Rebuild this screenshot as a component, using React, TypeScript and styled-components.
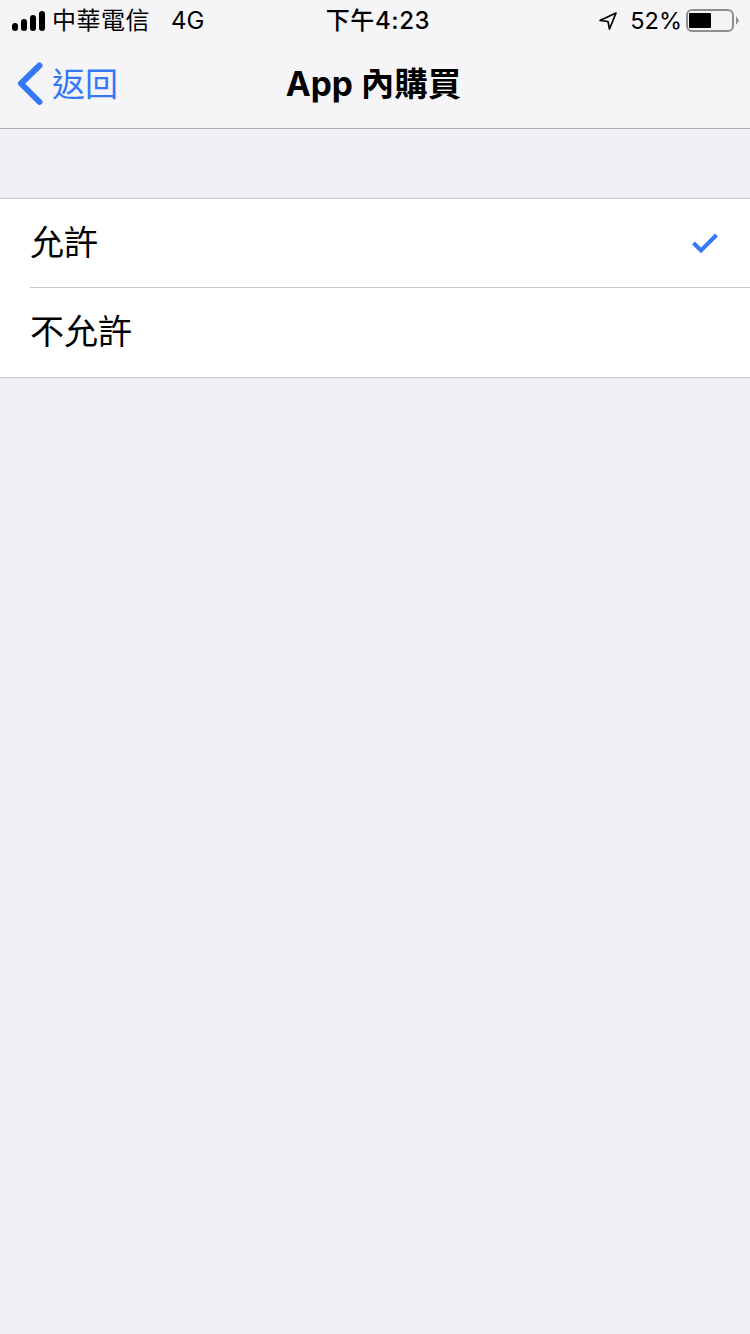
import React from "react";
import styled, { createGlobalStyle } from "styled-components";

const Global = createGlobalStyle`
    html, body {
        margin: 0;
        padding: 0;
        background: #efeff4;
    }
    body {
        font-family: Inter, "Noto Sans CJK TC", sans-serif;
    }
`

const Page = styled.div`
    width: 750px;
    height: 1334px;
    overflow: hidden;
    background: #efeff4;
    display: flex;
    flex-direction: column;
`

const Header = styled.div`
    height: 129px;
    box-sizing: border-box;
    background: #f5f5f8;
    border-bottom: 1px solid #a9a9ac;
    flex-shrink: 0;
`

const StatusBar = styled.div`
    height: 41px;
    padding: 0 10px 0 12px;
    display: grid;
    grid-template-columns: 1fr auto 1fr;
    align-items: center;
    color: #000;
`

const StatusLeft = styled.div`
    display: flex;
    align-items: center;
`

const StatusRight = styled.div`
    display: flex;
    align-items: center;
    justify-content: flex-end;
`

const Signal = styled.div`
    display: flex;
    align-items: flex-end;
    gap: 3px;
    width: 33px;
    margin-right: 7px;
`

const SignalBar = styled.span<{ $h: number }>`
    width: 6px;
    height: ${p => p.$h}px;
    border-radius: 3px;
    background: #000;
`

const StatusText = styled.span<{ $ml?: number }>`
    font-size: 24px;
    line-height: 41px;
    margin-left: ${p => p.$ml || 0}px;
    white-space: nowrap;
`

const Carrier = styled(StatusText)`
    letter-spacing: 0.5px;
`

const Percent = styled(StatusText)`
    font-size: 23.5px;
`

const Clock = styled.span`
    font-size: 24px;
    font-weight: 500;
    line-height: 41px;
    letter-spacing: 0.6px;
    margin-left: 4px;
`

const Battery = styled.div`
    position: relative;
    width: 48px;
    height: 23px;
    box-sizing: border-box;
    margin-left: 4px;
    margin-right: 6px;
    border: 2px solid #8e8e90;
    border-radius: 6px;
    padding: 2px 1px;
    &::after {
        content: "";
        position: absolute;
        right: -7px;
        top: 5px;
        width: 3px;
        height: 9px;
        background: #8e8e90;
        clip-path: polygon(0 0, 100% 50%, 0 100%);
    }
`

const BatteryFill = styled.div`
    width: 22px;
    height: 100%;
    background: #000;
    border-radius: 1px;
`

const NavBar = styled.div`
    height: 87px;
    position: relative;
    display: flex;
    align-items: center;
    justify-content: center;
`

const BackLink = styled.div`
    position: absolute;
    left: 17px;
    top: 0;
    height: 86px;
    display: flex;
    align-items: center;
    color: #3478f6;
`

const BackText = styled.span`
    font-size: 33px;
    margin-left: 9px;
    margin-top: -4px;
`

const Title = styled.div`
    font-size: 33.5px;
    font-weight: 700;
    color: #000;
    margin-top: -7px;
    margin-right: 3px;
`

const Section = styled.div`
    margin-top: 69px;
    background: #fff;
    border-top: 1px solid #c8c7cc;
    border-bottom: 1px solid #c8c7cc;
`

const Row = styled.div<{ $divider?: boolean }>`
    height: 88px;
    margin-left: 30px;
    padding-right: 31px;
    display: flex;
    align-items: center;
    justify-content: space-between;
    border-bottom: ${p => (p.$divider ? "1px solid #c8c7cc" : "none")};
    &:last-child {
        height: 89px;
    }
`

const RowLabel = styled.span`
    font-size: 34px;
    color: #000;
    margin-top: -6px;
`

export default function App() {
    const options = [
        { label: "允許", checked: true },
        { label: "不允許", checked: false },
    ]
    return (
        <Page>
            <Global />
            <Header>
                <StatusBar>
                    <StatusLeft>
                        <Signal>
                            <SignalBar $h={8} />
                            <SignalBar $h={12} />
                            <SignalBar $h={16} />
                            <SignalBar $h={20} />
                        </Signal>
                        <Carrier>中華電信</Carrier>
                        <StatusText $ml={21}>4G</StatusText>
                    </StatusLeft>
                    <Clock>下午4:23</Clock>
                    <StatusRight>
                        <svg width="20" height="20" viewBox="0 0 20 20" fill="none">
                            <path d="M18 2 L2 9.5 L10 10.5 L11.5 18 Z" stroke="#000" strokeWidth="1.7" strokeLinejoin="round" />
                        </svg>
                        <Percent $ml={12}>52%</Percent>
                        <Battery>
                            <BatteryFill />
                        </Battery>
                    </StatusRight>
                </StatusBar>
                <NavBar>
                    <BackLink>
                        <svg width="26" height="44" viewBox="0 0 26 44" fill="none">
                            <path d="M22.5 3.5 L4 21.5 L22.5 40" stroke="#3478f6" strokeWidth="6" strokeLinecap="round" strokeLinejoin="round" />
                        </svg>
                        <BackText>返回</BackText>
                    </BackLink>
                    <Title>App 內購買</Title>
                </NavBar>
            </Header>
            <Section>
                {options.map((option, index) => (
                    <Row key={option.label} $divider={index < options.length - 1}>
                        <RowLabel>{option.label}</RowLabel>
                        {option.checked && (
                            <svg width="28" height="22" viewBox="0 0 28 22" fill="none">
                                <path d="M2.5 11 L10 18.5 L25.5 3" stroke="#3478f6" strokeWidth="4" />
                            </svg>
                        )}
                    </Row>
                ))}
            </Section>
        </Page>
    );
}
